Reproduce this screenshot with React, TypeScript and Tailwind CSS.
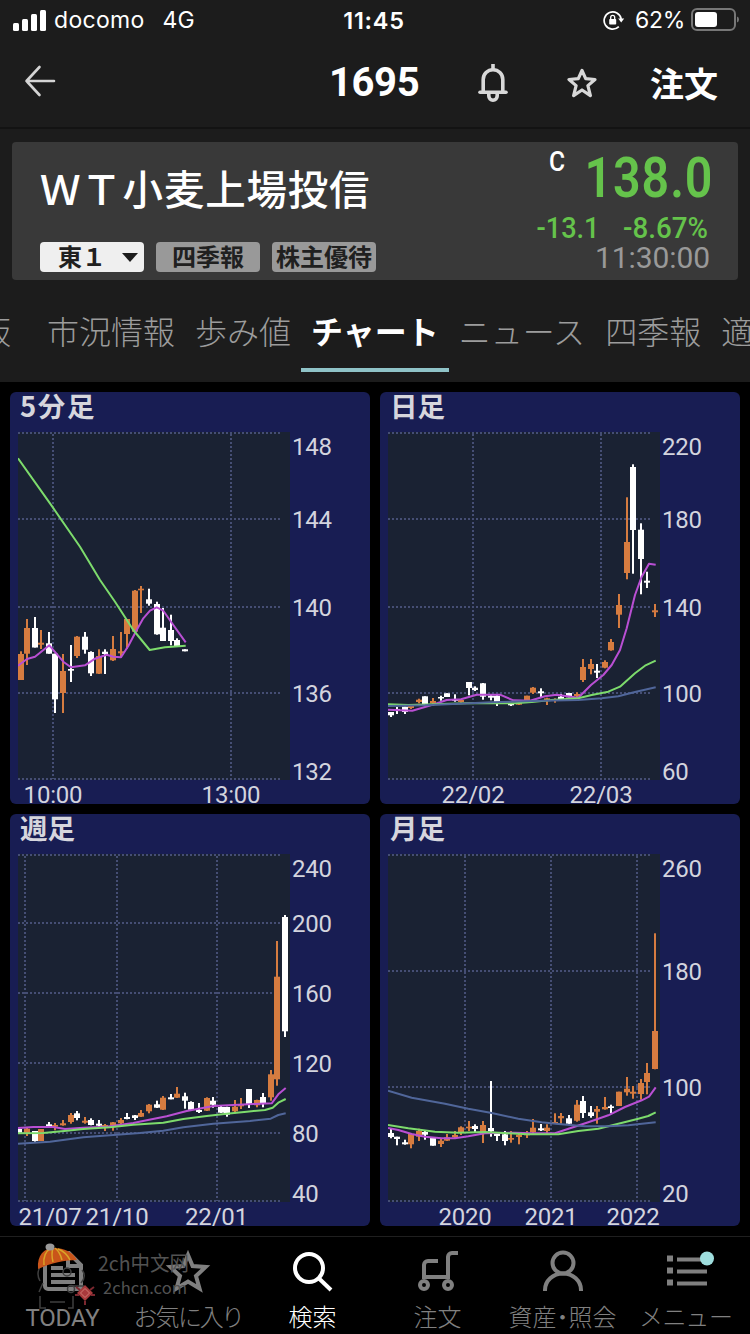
import type { ReactNode } from "react";
import clsx from "clsx";

type Tone = "up" | "down";

// center x, high, low, body top, body bottom, tone
type Candle = [number, number, number, number, number, Tone];

interface AxisLabel {
  text: string;
  at: number;
}

interface ChartData {
  title: string;
  titleSpacing?: number;
  rows: number[];
  cols: number[];
  yLabels: AxisLabel[];
  xLabels: AxisLabel[];
  candles: Candle[];
  short: string;
  mid: string;
  long?: string;
}

const CANDLE_COLORS: Record<Tone, string> = {
  up: "#d67c40",
  down: "#ffffff",
};

const charts: ChartData[] = [
  {
    title: "5分足",
    titleSpacing: 1.6,
    rows: [41, 127, 215, 301, 387],
    cols: [43, 221],
    yLabels: [
      { text: "148", at: 63 },
      { text: "144", at: 136 },
      { text: "140", at: 224 },
      { text: "136", at: 310 },
      { text: "132", at: 388 },
    ],
    xLabels: [
      { text: "10:00", at: 43 },
      { text: "13:00", at: 221 },
    ],
    candles: [
      [11, 259.3, 288, 262, 288, "up"],
      [17, 227, 273, 236, 261.7, "up"],
      [25, 225, 255.5, 236, 255.5, "down"],
      [31, 238, 257, 250.7, 252.7, "up"],
      [39, 240, 261.7, 251.3, 261.7, "down"],
      [45, 261.7, 321, 261.7, 307.3, "down"],
      [53, 262, 321, 279, 301, "up"],
      [61, 253, 290, 277, 278.7, "down"],
      [67, 244, 266, 244.7, 264, "up"],
      [75, 240, 261.7, 244.7, 257.7, "down"],
      [81, 259.3, 284, 260, 281.3, "down"],
      [89, 257.3, 282, 264, 281.7, "up"],
      [95, 257.3, 282, 259.7, 262, "down"],
      [103, 244, 269, 257, 268.3, "up"],
      [111, 240, 265.3, 259.3, 261.3, "up"],
      [117, 227, 257, 227, 242, "up"],
      [125, 198, 239.7, 198.7, 239.7, "up"],
      [131, 194, 221, 196.7, 198.3, "up"],
      [139, 196.7, 213.7, 207.3, 211.7, "down"],
      [147, 209.7, 242.7, 212, 242.3, "down"],
      [153, 216, 249, 235.7, 249, "down"],
      [161, 222.7, 253.3, 238, 249, "down"],
      [167, 246.3, 254, 248, 254, "down"],
      [175, 257.3, 259.3, 257.3, 259.3, "down"],
    ],
    short:
      "8,273.7 17,267 25,264.7 39.3,253.3 53.3,269.7 61,275.3 75,273.3 85,266.7 96.7,262.7 103.3,264.7 111,265.3 118.3,254 126.7,238 133.3,226.3 140,218.7 146.7,215.3 153.3,218.7 161.7,230.7 175.7,250.3",
    mid: "8,66.3 42.3,114.7 70,154.7 90,188 105,209.7 123.3,238 139.7,258 155,255.3 175.7,253.7",
  },
  {
    title: "日足",
    rows: [41, 127, 215, 301, 387],
    cols: [93, 221],
    yLabels: [
      { text: "220", at: 63 },
      { text: "180", at: 136 },
      { text: "140", at: 224 },
      { text: "100", at: 310 },
      { text: "60", at: 388 },
    ],
    xLabels: [
      { text: "22/02", at: 93 },
      { text: "22/03", at: 221 },
    ],
    candles: [
      [11, 320, 325, 320, 323.3, "down"],
      [17, 315, 322, 317, 319, "down"],
      [25, 314.7, 322, 314.7, 320, "down"],
      [31, 314, 317, 314, 316, "up"],
      [39, 306.7, 311.3, 307.7, 310, "up"],
      [45, 304.3, 312, 304.3, 312, "down"],
      [53, 306, 314, 309, 311.3, "up"],
      [61, 303.7, 308.7, 305, 306.5, "down"],
      [67, 301.3, 305, 301.3, 305, "down"],
      [75, 302.3, 309.7, 307.3, 308.7, "down"],
      [81, 307, 310.7, 308, 310, "up"],
      [89, 290, 303.3, 290, 296, "down"],
      [95, 294.3, 299, 295.7, 298, "down"],
      [103, 291, 307.7, 291.3, 304.7, "down"],
      [111, 302.3, 308.3, 303.7, 305.7, "down"],
      [117, 303, 314, 303.7, 312, "down"],
      [131, 311, 314, 311.3, 313.3, "down"],
      [139, 310.3, 313, 311, 312.7, "up"],
      [147, 303.7, 308, 303.7, 308, "up"],
      [153, 295, 302, 295.7, 300.7, "up"],
      [161, 296.3, 305, 299.3, 301.3, "down"],
      [167, 305.7, 313, 306.3, 308, "up"],
      [175, 306.3, 310.7, 307.3, 309, "up"],
      [181, 302, 307.3, 304.7, 307, "down"],
      [189, 301, 305.3, 301, 305.3, "down"],
      [197, 300.3, 305.3, 302, 304, "up"],
      [203, 267, 290, 275, 288, "up"],
      [211, 267, 282.3, 272, 277, "up"],
      [217, 272, 286, 278.7, 280.7, "down"],
      [225, 268.3, 276.3, 270, 275.7, "up"],
      [231, 247, 258.7, 250, 258.3, "up"],
      [239, 202, 236, 213, 222.7, "up"],
      [247, 105.3, 187.3, 150, 181, "up"],
      [253, 72.3, 181.7, 75, 138, "down"],
      [261, 131.3, 202.3, 137.7, 167, "down"],
      [267, 179.7, 196, 188.7, 190.7, "down"],
      [275, 212, 225, 218.3, 220.3, "up"],
    ],
    short:
      "8,317.7 32.3,318.7 55,312 66.7,308 81,307.3 96.7,302.7 120,302.7 133.3,308.3 150,308.7 165,304.3 176.7,302.7 198.3,305.7 211,293 223.3,283 231.7,273 240,258 246.7,236.3 255,203 261.7,184.7 269,171.7 275.7,172.7",
    mid: "8,312.3 28.3,313 61.7,312 95,311 135,311.3 151.7,310 171.7,308 198.3,306.3 211.7,303 228.3,299.7 240,294.7 255,281.3 265,273.7 275.7,268.7",
    long: "8,314 45,313.3 78.3,311.7 111.7,310.3 161.7,308.7 198.3,308 221.7,306.3 238.3,304.3 255,300 275.7,295.3",
  },
  {
    title: "週足",
    rows: [41, 109, 179, 249, 319, 387],
    cols: [15, 107, 207],
    yLabels: [
      { text: "240", at: 63 },
      { text: "200", at: 118 },
      { text: "160", at: 188 },
      { text: "120", at: 258 },
      { text: "80", at: 328 },
      { text: "40", at: 388 },
    ],
    xLabels: [
      { text: "21/07", at: 40 },
      { text: "21/10", at: 107 },
      { text: "22/01", at: 206.5 },
    ],
    candles: [
      [9, 315, 318.7, 315, 318.7, "down"],
      [17, 313.7, 322, 314.7, 319.7, "up"],
      [25, 317, 327.7, 317, 327, "down"],
      [31, 315, 327, 315, 327, "up"],
      [39, 308, 313, 310.3, 312, "down"],
      [45, 309, 316.3, 311, 312.7, "up"],
      [53, 306, 311.7, 309.3, 311.3, "up"],
      [61, 299, 309.7, 301, 308, "up"],
      [67, 297, 306.3, 299.3, 304, "down"],
      [75, 303, 309.7, 306.7, 308.7, "up"],
      [81, 304.3, 311.3, 306, 311, "down"],
      [89, 306, 312.7, 309.7, 311.7, "down"],
      [95, 310, 317, 311, 312.7, "up"],
      [103, 308, 316.7, 308.3, 311.7, "up"],
      [111, 304, 310, 306, 309.3, "up"],
      [117, 299, 305.3, 303, 305, "down"],
      [125, 301, 306, 301.3, 304, "down"],
      [131, 296, 303, 299, 302.7, "up"],
      [139, 290, 299.3, 290.7, 297.3, "up"],
      [147, 286.7, 294, 290.3, 293.7, "down"],
      [153, 282, 296, 283.7, 295.7, "up"],
      [161, 280, 285.3, 283.3, 285.3, "down"],
      [167, 273, 284, 279.7, 283.7, "up"],
      [175, 278.7, 294.7, 282.3, 286.7, "down"],
      [181, 287.3, 296, 288, 295.7, "down"],
      [189, 289, 299, 296, 298, "down"],
      [197, 283.3, 297, 284, 296.7, "up"],
      [203, 283, 293.7, 286.7, 290.7, "down"],
      [211, 292, 299, 293, 298.7, "down"],
      [217, 292.7, 302.7, 293, 300.7, "down"],
      [225, 286, 299.3, 292.7, 297.3, "up"],
      [231, 284, 295, 290.3, 292.3, "up"],
      [239, 275, 294, 275, 290.7, "down"],
      [247, 285.7, 293.3, 286, 291.3, "up"],
      [253, 279, 293.3, 283, 289.3, "down"],
      [261, 256, 286.7, 260.3, 283.3, "up"],
      [267, 127, 271.7, 162.7, 265.3, "up"],
      [275, 101, 223, 103, 217.3, "down"],
    ],
    short:
      "8,314 23.3,313 43.3,313 55,315 73.3,313.7 96.7,312.7 123.3,309 136.7,306.3 156.7,302.3 176.7,297 203.3,292 223.3,291 243.3,290 261.7,289.3 268.3,280.3 275.7,274",
    mid: "8,319.3 33.3,319 56.7,316.7 73.3,315 100,313.3 123.3,310.7 153.3,308.7 173.3,305 196.7,302 216.7,299.7 236.7,297.7 255,296 262.7,293.7 268.3,288.7 275.7,285",
    long: "8,329.7 40,327.7 73.3,323.3 106.7,320.7 130,319 153.3,316.7 173.3,313.3 203.3,309.7 223.3,308.3 240,307 260.7,304.7 268.3,301 275.7,299.3",
  },
  {
    title: "月足",
    rows: [41, 157, 273, 387],
    cols: [85, 171, 257],
    yLabels: [
      { text: "260", at: 63 },
      { text: "180", at: 166 },
      { text: "100", at: 282 },
      { text: "20", at: 388 },
    ],
    xLabels: [
      { text: "2020", at: 85 },
      { text: "2021", at: 171 },
      { text: "2022", at: 253 },
    ],
    candles: [
      [11, 315, 324.3, 319, 323, "down"],
      [17, 322.7, 331.3, 322.7, 325, "down"],
      [25, 325.7, 330.7, 328.3, 330.3, "down"],
      [31, 319, 334.3, 320, 330.3, "up"],
      [39, 314.7, 327, 317, 322.7, "up"],
      [45, 316.7, 325.7, 318, 320.7, "down"],
      [53, 324, 331.7, 324, 331.7, "down"],
      [61, 325, 333, 326.7, 330, "up"],
      [67, 320, 327, 323.3, 326.7, "up"],
      [75, 317, 324, 321, 323.3, "up"],
      [81, 312.3, 321, 313.3, 319, "up"],
      [89, 307, 317, 312.7, 314.3, "up"],
      [95, 310.3, 319, 312, 315, "down"],
      [103, 307, 329, 311, 318.7, "up"],
      [111, 267, 322.7, 314, 317.3, "down"],
      [117, 319.3, 327, 320, 322, "down"],
      [125, 317, 331.3, 320.3, 327, "down"],
      [131, 317, 328.7, 324, 325.7, "up"],
      [139, 320, 330.3, 320.7, 323, "up"],
      [147, 317, 324, 319.3, 321.3, "up"],
      [153, 305, 319.3, 313.7, 318.3, "up"],
      [161, 310, 317, 314.3, 316.3, "down"],
      [167, 310.3, 319.3, 313.7, 317, "up"],
      [175, 299.3, 310, 308, 309.7, "up"],
      [181, 299, 309.7, 302, 304.3, "up"],
      [189, 301, 310.3, 304.3, 309.7, "down"],
      [197, 286, 307.7, 290.7, 306.7, "up"],
      [203, 282, 304, 287, 299, "down"],
      [211, 292, 303.7, 298.3, 302, "down"],
      [217, 292, 309.7, 295, 297.7, "up"],
      [225, 283, 295.7, 293, 295.3, "up"],
      [231, 290.7, 299, 292.3, 294, "down"],
      [239, 277.7, 292, 277.7, 292, "up"],
      [247, 263, 281.7, 274.7, 278.3, "up"],
      [253, 272, 284.7, 277.7, 279.7, "up"],
      [261, 265, 285.7, 269, 280, "up"],
      [267, 249, 280.3, 259, 268, "up"],
      [275, 119.3, 255.3, 217, 255, "up"],
    ],
    short:
      "8,314 18.3,316 31.7,320 45,322.7 61.7,324.3 75,324.3 88.3,322.3 105,319.3 135,318.7 151.7,319.3 175,319.3 190,314.3 208.3,308.3 228.3,301.3 245,293 261.7,286.3 269,282.7 275.7,273.3",
    mid: "8,311 28.3,314.3 55,317.7 78.3,318.7 105,318 128.3,319.3 148.3,320.3 178.3,320.3 198.3,317 218.3,314.7 238.3,309.7 258.3,304.7 268.3,302 275.7,298.3",
    long: "8,276.7 31.7,283.7 65,289.7 88.3,294.7 111.7,299 138.3,304.7 161.7,308.3 178.3,310 205,312.3 228.3,312.3 248.3,311.3 275.7,308.3",
  },
];

function CandleChart({ chart }: { chart: ChartData }) {
  return (
    <section className="h-[412px] overflow-hidden rounded-md bg-[#181d53]">
      <svg viewBox="0 0 360 412" className="block h-full w-full font-['Roboto',sans-serif]">
        <text
          x="10"
          y="24.500"
          fontSize="27.500"
          fill="#d6d6dd"
          letterSpacing={chart.titleSpacing}
          className="font-['Noto_Sans_CJK_JP',sans-serif] font-bold"
        >
          {chart.title}
        </text>
        <svg x="8" y="40" width="272" height="348" viewBox="8 40 272 348">
          <rect x="8" y="40" width="272" height="348" fill="#1a2233" />
          <g stroke="#454e74" strokeWidth="2" strokeDasharray="2 2">
            {chart.rows.map((y) => (
              <line key={y} x1="8" x2="271" y1={y} y2={y} />
            ))}
            {chart.cols.map((x) => (
              <line key={x} x1={x} x2={x} y1="42" y2="387" />
            ))}
          </g>
          {chart.candles.map(([x, high, low, top, bottom, tone]) => (
            <g key={x} fill={CANDLE_COLORS[tone]}>
              <rect x={x - 1} y={high} width="2" height={low - high} />
              <rect x={x - 3} y={top} width="6" height={bottom - top} />
            </g>
          ))}
          <g fill="none" strokeWidth="2" strokeLinejoin="round">
            <polyline points={chart.short} stroke="#b94fd3" />
            <polyline points={chart.mid} stroke="#7ddb6c" />
            {chart.long && <polyline points={chart.long} stroke="#50669a" />}
          </g>
        </svg>
        <g fontSize="24" fill="#d3d4de" letterSpacing="-0.2">
          {chart.yLabels.map(({ text, at }) => (
            <text key={text} x="282" y={at}>
              {text}
            </text>
          ))}
          {chart.xLabels.map(({ text, at }) => (
            <text key={text} x={at} y="411" textAnchor="middle">
              {text}
            </text>
          ))}
        </g>
      </svg>
    </section>
  );
}

function StatusBar() {
  return (
    <div className="grid h-10 grid-cols-3 items-center pr-[11px] pl-[13px] font-['Inter',sans-serif] text-[24px] leading-none">
      <div className="flex items-center">
        <svg viewBox="0 0 33 21" className="h-[21px] w-[33px]" fill="#fff">
          <rect x="0" y="13" width="6" height="8" rx="1.5" />
          <rect x="9" y="9" width="6" height="12" rx="1.5" />
          <rect x="18" y="4" width="6" height="17" rx="1.5" />
          <rect x="27" y="0" width="6" height="21" rx="1.5" />
        </svg>
        <span className="ml-2 pt-px text-[23px] tracking-[0.3px]">docomo</span>
        <span className="ml-[18px] pt-px text-[23px]">4G</span>
      </div>
      <div className="-ml-1 pt-px text-center text-[23.5px] font-semibold tracking-[0.7px]">11:45</div>
      <div className="flex items-center justify-end">
        <svg viewBox="0 0 22 20" className="h-5 w-[22px]" fill="none" stroke="#fff" strokeWidth="1.7">
          <path d="M15.8 16.6A8.6 8.6 0 1 1 18.2 9" />
          <path d="M15.2 8.6h6l-3 4z" fill="#fff" stroke="none" />
          <rect x="6.2" y="9" width="7" height="5.6" rx="0.8" fill="#fff" stroke="none" />
          <path d="M7.7 9V7.4a2 2 0 0 1 4 0V9" strokeWidth="1.3" />
        </svg>
        <span className="ml-2.5 pt-px text-[23px] tracking-[-0.3px]">62%</span>
        <svg viewBox="0 0 48 24" className="ml-1.5 h-6 w-12">
          <rect x="1" y="1" width="43" height="21" rx="5" fill="none" stroke="#777" strokeWidth="2" />
          <rect x="4" y="4" width="22" height="15" rx="3" fill="#fff" />
          <path d="M46 8.5q2 0.7 2 3t-2 3z" fill="#777" />
        </svg>
      </div>
    </div>
  );
}

function NavBar() {
  return (
    <header className="flex h-[89px] items-center border-b-2 border-[#131313] pr-8 pb-0.5 pl-6">
      <svg
        viewBox="0 0 32 32"
        className="-mt-1 h-8 w-8"
        fill="none"
        stroke="#d4d4d4"
        strokeWidth="2.6"
        strokeLinecap="round"
        strokeLinejoin="round"
      >
        <path d="M30 16H2.500M15.500 2L2.500 16l13 14" />
      </svg>
      <h1 className="ml-[273px] w-[91px] font-['Roboto',sans-serif] text-[40px] leading-none font-bold tracking-[-0.4px]">
        1695
      </h1>
      <svg viewBox="0 0 30 38" className="ml-[58px] h-[38px] w-[30px]" fill="none" stroke="#d8d8d8" strokeWidth="3.6">
        <path d="M5.200 28V15.500a9.800 9.800 0 0 1 19.600 0V28" />
        <path d="M2 28.200H28" strokeLinecap="round" />
        <path d="M15 0v5M10.800 29v3a4.200 4.200 0 0 0 8.400 0v-3" />
      </svg>
      <svg
        viewBox="0 0 30 30"
        className="ml-[59px] h-[30px] w-[30px]"
        fill="none"
        stroke="#d8d8d8"
        strokeWidth="3.2"
        strokeLinejoin="round"
      >
        <path d="M15 2.5l3.700 8.200 9.300.8-7.100 6.100 2.500 10L15 22l-8.400 5.600 2.500-10L2 11.500l9.300-.8z" />
      </svg>
      <button type="button" className="ml-[53px] text-[34px] leading-none font-bold whitespace-nowrap">
        注文
      </button>
    </header>
  );
}

function QuoteCard() {
  return (
    <section className="mx-3 mt-[13px] flex h-[138px] justify-between rounded bg-[#393939] pr-7 pl-7">
      <div className="flex flex-col">
        <h2 className="mt-[19px] h-[54px] text-[40.5px] leading-[54px] font-medium tracking-[0.8px] whitespace-nowrap">
          ＷＴ小麦上場投信
        </h2>
        <div className="mt-[27px] flex gap-3 text-[24px] leading-[27px] font-bold text-[#202020]">
          <div className="flex h-[30px] w-26 items-center justify-between rounded-sm bg-[#efefef] pr-1.5 pl-[18px]">
            <span className="-mt-[3px]">東１</span>
            <svg viewBox="0 0 16 9" className="h-[9px] w-4" fill="#1c1c1c">
              <path d="M0 0h16L8 9z" />
            </svg>
          </div>
          <div className="h-[30px] w-26 rounded-sm bg-[#999] text-center">四季報</div>
          <div className="h-[30px] w-26 rounded-sm bg-[#999] text-center whitespace-nowrap">株主優待</div>
        </div>
      </div>
      <div className="flex flex-col items-end font-['Roboto',sans-serif]">
        <div className="mt-2 flex w-[161px] justify-between text-[#65c34b]">
          <span className="mt-[-3px] h-[30px] w-[18px] origin-left scale-x-88 text-[28px] leading-[30px] font-medium text-white">
            C
          </span>
          <span className="origin-right scale-x-88 text-[55px] leading-[56px] font-semibold tracking-[1px]">138.0</span>
        </div>
        <div className="mt-[7px] flex text-[29.5px] leading-[30px] font-medium text-[#65c34b]">
          <span className="mr-[23px] origin-right scale-x-92">-13.1</span>
          <span className="w-[87px] origin-left scale-x-94">-8.67%</span>
        </div>
        <div className="text-[30px] leading-[30px] tracking-[-0.1px] text-[#999]">11:30:00</div>
      </div>
    </section>
  );
}

const tabs = ["板", "市況情報", "歩み値", "チャート", "ニュース", "四季報", "適時開示"];

function Tabs() {
  return (
    <nav className="mt-4 flex h-[86px] overflow-hidden pb-[10px]">
      <div className="-ml-[47px] flex">
        {tabs.map((tab) => (
          <div
            key={tab}
            className={clsx(
              "flex min-w-[84px] shrink-0 items-center justify-center border-b-4 px-2.5 text-[32px] leading-none whitespace-nowrap",
              tab === "チャート"
                ? "border-[#8fc3c7] font-bold text-white"
                : "border-transparent font-light text-[#9c9c9c]"
            )}
          >
            <span className="pb-1">{tab}</span>
          </div>
        ))}
      </div>
    </nav>
  );
}

interface NavItemProps {
  label: string;
  active?: boolean;
  labelClass?: string;
  children: ReactNode;
}

function NavItem({ label, active, labelClass = "font-light", children }: NavItemProps) {
  return (
    <div className={clsx("flex flex-col items-center pt-3.5", active ? "text-white" : "text-[#808080]")}>
      <svg viewBox="0 0 40 40" className="h-10 w-10 overflow-visible" fill="none" stroke="currentColor" strokeWidth="4">
        {children}
      </svg>
      <span
        className={clsx(
          "mt-2.5 font-['Roboto','Noto_Sans_CJK_JP',sans-serif] text-[24px] leading-[34px] whitespace-nowrap [font-feature-settings:'palt']",
          labelClass
        )}
      >
        {label}
      </span>
    </div>
  );
}

function BottomNav() {
  return (
    <footer className="relative mt-2.5 grid h-[98px] grid-cols-6 border-t border-[#1f1f1f] bg-black">
      <NavItem label="TODAY" labelClass="font-normal tracking-[-0.2px]">
        <path d="M26 2H5a3 3 0 0 0-3 3v30a3 3 0 0 0 3 3h30a3 3 0 0 0 3-3V14z" />
        <path d="M25 2v13h13M8 17h12M8 24h24M8 31h24" />
      </NavItem>
      <NavItem label="お気に入り" labelClass="font-light tracking-[-1.4px]">
        <path d="M20 4l4.600 11 13 1-9.600 9 3.500 12.500L20 30.500 8.500 37.500 12 25 2.400 16l13-1z" />
      </NavItem>
      <NavItem label="検索" active>
        <circle cx="16" cy="17" r="14" />
        <path d="M26 27.500L38 39" />
      </NavItem>
      <NavItem label="注文">
        <path d="M6 28V14a4 4 0 0 1 4-4h10M6 26h24M30 28V6a4 4 0 0 1 4-4h6" />
        <circle cx="6" cy="34" r="4" />
        <circle cx="30" cy="34" r="4" />
      </NavItem>
      <NavItem label="資産・照会">
        <circle cx="20" cy="12" r="10.500" />
        <path d="M2 40v-1a18 16.500 0 0 1 36 0v1" />
      </NavItem>
      <NavItem label="メニュー" labelClass="font-light tracking-[1.8px]">
        <path d="M9 8.500h30M9 20.500h30M9 32.500h30" />
        <path d="M-1 7.500h6M-1 19.500h6M-1 31.500h6" strokeWidth="6" />
        <circle cx="39" cy="7.500" r="7" fill="#9fdede" stroke="none" />
      </NavItem>
      <Watermark />
    </footer>
  );
}

function Watermark() {
  return (
    <svg viewBox="0 0 170 70" className="pointer-events-none absolute top-[3px] left-[30px] h-[70px] w-[170px]">
      <g fill="none" stroke="#3f3f3f" strokeWidth="1.500">
        <path d="M10 27q-4 7 0 14M52 30q5 6-1 13M13 43l-4 9M10 56v12h6M20 62h15M38 68h5V56M40 46h14" />
        <circle cx="37" cy="32" r="4" />
        <circle cx="41" cy="49" r="3.500" />
      </g>
      <path d="M8 29C7 15 14 8 24 8s19 4 23 12c-12 0-26 3-39 9z" fill="#c9551a" />
      <path
        d="M14 25C13 17 16 11 21 8M23 22q-2-8 0-14M32 20q-2-8-7-12M40 20Q36 12 28 9"
        fill="none"
        stroke="#d9a528"
        strokeWidth="1.500"
      />
      <ellipse cx="20" cy="7" rx="4.500" ry="3.500" fill="#9a9a9a" />
      <path d="M55 45l8 8-8 8-8-8z" fill="#a83a3c" />
      <path d="M55 48.500l4.500 4.500-4.500 4.500-4.500-4.500z" fill="none" stroke="#d07a72" />
      <path d="M46 47l4 3M64 47l-4 3M45 55h4M61 55h4M55 61v4" stroke="#7c2830" strokeWidth="2" />
      <g className="font-['Noto_Sans_CJK_SC',sans-serif]" fill="#525252">
        <text x="68" y="31" fontSize="20.500" textLength="91" lengthAdjust="spacingAndGlyphs">
          2ch中文网
        </text>
        <text x="73" y="54" fontSize="16" textLength="84" lengthAdjust="spacingAndGlyphs">
          2chcn.com
        </text>
      </g>
    </svg>
  );
}

export default function App() {
  return (
    <div className="flex h-[1334px] w-[750px] flex-col overflow-hidden bg-black font-['Noto_Sans_CJK_JP',sans-serif] text-white">
      <div className="h-[382px] bg-[#1c1c1c]">
        <StatusBar />
        <NavBar />
        <QuoteCard />
        <Tabs />
      </div>
      <main className="grid grid-cols-2 gap-2.5 px-2.5 pt-2.5">
        {charts.map((chart) => (
          <CandleChart key={chart.title} chart={chart} />
        ))}
      </main>
      <BottomNav />
    </div>
  );
}
